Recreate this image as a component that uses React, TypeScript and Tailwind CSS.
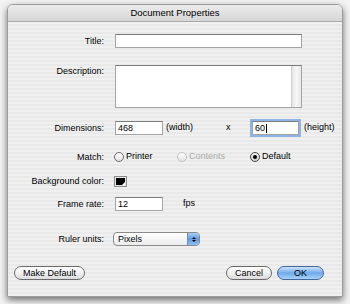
import React from "react";

const font = { fontFamily: '"Liberation Sans", Arial, sans-serif' };

function Label({ children, top = false }: { children: React.ReactNode; top?: boolean }) {
  return (
    <div className={`w-[96px] shrink-0 text-right text-[9px] leading-[11px] text-black ${top ? "pt-[1px]" : ""}`}>
      {children}
    </div>
  );
}

function Field({ w, value, focus = false }: { w: string; value?: string; focus?: boolean }) {
  return (
    <div
      className={`${w} h-[14px] bg-white border border-[#a5a5a5] border-t-[#7c7c7c] flex items-center pl-[2px] text-[9px] leading-[11px] text-black ${
        focus ? "shadow-[0_0_0_2px_#8cb4e6]" : ""
      }`}
    >
      {value}
      {focus && <span className="inline-block w-[1px] h-[9px] bg-black ml-[1px]" />}
    </div>
  );
}

function Radio({ state }: { state: "off" | "dis" | "on" }) {
  if (state === "on") {
    return (
      <div className="w-[10px] h-[10px] rounded-full border border-[#4a4a4a] bg-gradient-to-b from-[#f4f4f4] to-[#cfcfcf] flex items-center justify-center">
        <div className="w-[4px] h-[4px] rounded-full bg-black" />
      </div>
    );
  }
  return (
    <div
      className={`w-[10px] h-[10px] rounded-full border bg-gradient-to-b from-white to-[#e2e2e2] ${
        state === "dis" ? "border-[#c2c2c2]" : "border-[#6e6e6e]"
      }`}
    />
  );
}

export default function App() {
  return (
    <div className="w-[350px] h-[304px] bg-[#f3f3f3] pt-[4px] pl-[7px] overflow-hidden" style={font}>
      <div className="w-[336px] h-[293px] rounded-t-[6px] border border-[#9b9b9b] shadow-[0_3px_7px_rgba(0,0,0,0.55)] flex flex-col overflow-hidden">
        {/* Title bar */}
        <div className="h-[17px] shrink-0 bg-gradient-to-b from-[#ececec] to-[#d6d6d6] border-b border-[#a8a8a8] flex items-center justify-center text-[9.5px] text-black">
          Document Properties
        </div>
        {/* Body */}
        <div className="flex-1 flex flex-col bg-[repeating-linear-gradient(180deg,#f0f0f0_0px,#f0f0f0_2px,#e9e9e9_2px,#e9e9e9_4px)]">
          {/* Title */}
          <div className="flex items-center mt-[12px]">
            <Label>Title:</Label>
            <div className="ml-[11px]">
              <Field w="w-[187px]" />
            </div>
          </div>
          {/* Description */}
          <div className="flex items-start mt-[17px]">
            <Label top>Description:</Label>
            <div className="ml-[11px] w-[187px] h-[43px] bg-white border border-[#a5a5a5] border-t-[#7c7c7c] flex justify-end">
              <div className="w-[10px] h-full bg-gradient-to-r from-[#e4e4e4] via-[#f7f7f7] to-[#e8e8e8] border-l border-[#cfcfcf]" />
            </div>
          </div>
          {/* Dimensions */}
          <div className="flex items-center mt-[13px]">
            <Label>Dimensions:</Label>
            <div className="ml-[11px]">
              <Field w="w-[48px]" value="468" />
            </div>
            <span className="ml-[3px] w-[60px] text-[9px]">(width)</span>
            <span className="w-[26px] text-[9px]">x</span>
            <Field w="w-[47px]" value="60" focus />
            <span className="ml-[5px] text-[9px]">(height)</span>
          </div>
          {/* Match */}
          <div className="flex items-center mt-[16px] h-[12px]">
            <Label>Match:</Label>
            <div className="ml-[10px] w-[63px] flex items-center">
              <Radio state="off" />
              <span className="ml-[2px] text-[9px]">Printer</span>
            </div>
            <div className="w-[73px] flex items-center">
              <Radio state="dis" />
              <span className="ml-[2px] text-[9px] text-[#a8a8a8]">Contents</span>
            </div>
            <div className="flex items-center">
              <Radio state="on" />
              <span className="ml-[2px] text-[9px]">Default</span>
            </div>
          </div>
          {/* Background color */}
          <div className="flex items-center mt-[13px]">
            <Label>Background color:</Label>
            <div className="ml-[10px] w-[13px] h-[11px] border border-[#8a8a8a] bg-[#e8e8e8] p-[1px] relative">
              <div className="w-full h-full bg-black" />
              <div className="absolute right-[1px] bottom-[1px] w-0 h-0 border-l-[3px] border-l-transparent border-b-[3px] border-b-white" />
            </div>
          </div>
          {/* Frame rate */}
          <div className="flex items-center mt-[10px]">
            <Label>Frame rate:</Label>
            <div className="ml-[11px]">
              <Field w="w-[48px]" value="12" />
            </div>
            <span className="ml-[20px] text-[9px]">fps</span>
          </div>
          {/* Ruler units */}
          <div className="flex items-center mt-[21px]">
            <Label>Ruler units:</Label>
            <div className="ml-[9px] w-[87px] h-[14px] rounded-[4px] border border-[#8a8a8a] bg-gradient-to-b from-white to-[#ececec] flex items-center overflow-hidden">
              <span className="flex-1 pl-[4px] text-[9px] leading-[11px]">Pixels</span>
              <div className="w-[12px] h-full bg-gradient-to-b from-[#a9cdf3] via-[#5e9be3] to-[#8dc0f2] border-l border-[#6d8fc0] flex flex-col items-center justify-center gap-[1px]">
                <div className="w-0 h-0 border-l-[2px] border-r-[2px] border-b-[2px] border-l-transparent border-r-transparent border-b-black" />
                <div className="w-0 h-0 border-l-[2px] border-r-[2px] border-t-[2px] border-l-transparent border-r-transparent border-t-black" />
              </div>
            </div>
          </div>
          {/* Buttons */}
          <div className="flex items-center mt-[20px] pl-[6px] pr-[18px]">
            <button className="w-[71px] h-[14px] rounded-full border border-[#6a6a6a] bg-gradient-to-b from-white via-[#f1f1f1] to-[#dcdcdc] text-[9px] leading-[11px] text-black">
              Make Default
            </button>
            <div className="flex-1" />
            <button className="w-[46px] h-[14px] rounded-full border border-[#6a6a6a] bg-gradient-to-b from-white via-[#f1f1f1] to-[#dcdcdc] text-[9px] leading-[11px] text-black">
              Cancel
            </button>
            <button className="ml-[5px] w-[47px] h-[14px] rounded-full border border-[#41679e] bg-gradient-to-b from-[#cfe4fb] via-[#6ea9ec] to-[#a9d2f8] text-[9px] leading-[11px] text-black">
              OK
            </button>
          </div>
        </div>
      </div>
    </div>
  );
}
